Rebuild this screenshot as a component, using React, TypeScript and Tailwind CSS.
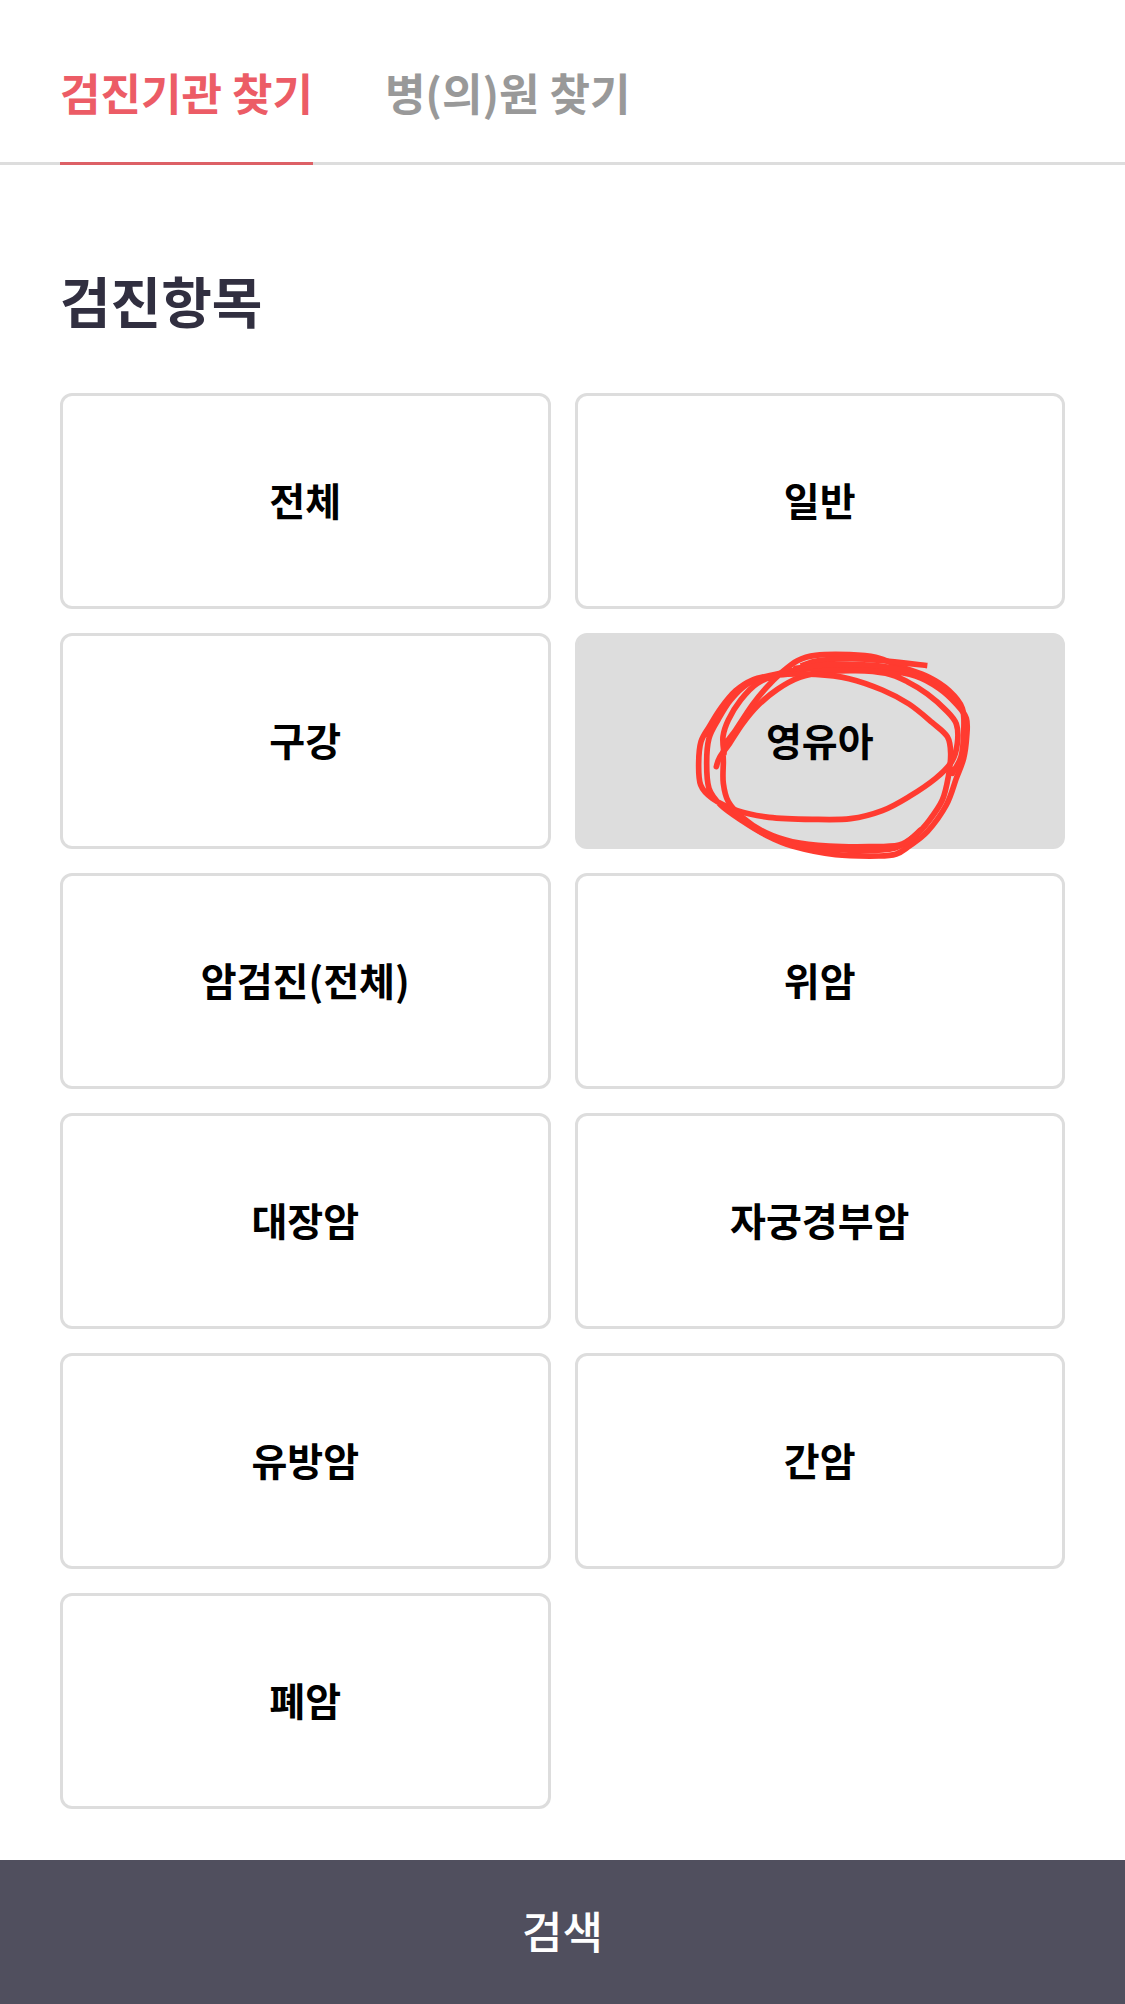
import { useState } from "react";

const items = [
  "전체",
  "일반",
  "구강",
  "영유아",
  "암검진(전체)",
  "위암",
  "대장암",
  "자궁경부암",
  "유방암",
  "간암",
  "폐암",
];

const tabs = ["검진기관 찾기", "병(의)원 찾기"];

type Point = [number, number];

// Pen strokes of the marker loop, as sampled points.
const strokes: Point[][] = [
  [
    [142, 440], [152, 412], [182, 370], [220, 312], [265, 258], [325, 208], [392, 172],
    [470, 156], [560, 152], [650, 160], [715, 185], [775, 222], [830, 270], [862, 312],
    [865, 370], [848, 425], [800, 475], [720, 530], [640, 572], [545, 596], [430, 598],
    [300, 592], [205, 572], [130, 535], [95, 495], [89, 430], [96, 365], [122, 318],
    [155, 265], [200, 212], [250, 180], [310, 165], [400, 148], [520, 143], [640, 150],
    [740, 168], [810, 205], [862, 252], [892, 295], [893, 350], [884, 415], [862, 475],
    [832, 555], [775, 635], [718, 680], [682, 702], [630, 708], [500, 704], [370, 678],
    [290, 645], [220, 603], [155, 555], [120, 505], [113, 430], [120, 355], [148, 298],
    [185, 240], [235, 192], [300, 168],
  ],
  [
    [165, 400], [162, 350], [178, 300], [215, 240], [265, 190], [330, 165], [440, 163],
    [540, 176], [640, 210], [720, 252], [790, 308], [835, 350], [845, 400], [838, 470],
    [820, 540], [780, 602], [740, 645], [690, 675], [600, 680], [480, 678], [370, 665],
    [290, 638], [220, 592], [178, 545], [163, 490], [163, 430], [166, 380], [200, 330],
    [250, 255], [290, 205], [335, 160], [385, 122], [440, 106], [540, 104], [620, 112],
    [700, 142], [780, 172], [840, 212], [880, 265], [884, 340], [876, 410], [850, 460],
  ],
  [
    [395, 138], [450, 122], [550, 116], [660, 124], [775, 137],
  ],
  [
    [380, 145], [480, 134], [600, 135], [700, 150], [780, 182],
  ],
  [
    [200, 575], [270, 632], [370, 672], [500, 688], [640, 690], [705, 672], [755, 630],
  ],
];

function smooth(points: Point[]) {
  let d = `M${points[0][0]} ${points[0][1]}`;
  for (let i = 0; i < points.length - 1; i++) {
    const p0 = points[Math.max(i - 1, 0)];
    const p1 = points[i];
    const p2 = points[i + 1];
    const p3 = points[Math.min(i + 2, points.length - 1)];
    d += `C${p1[0] + (p2[0] - p0[0]) / 6} ${p1[1] + (p2[1] - p0[1]) / 6} ${
      p2[0] - (p3[0] - p1[0]) / 6
    } ${p2[1] - (p3[1] - p1[1]) / 6} ${p2[0]} ${p2[1]}`;
  }
  return d;
}

function HandDrawnCircle() {
  return (
    <svg
      className="pointer-events-none absolute -top-4 left-1/2 -ml-[151px] h-[250px] w-[320px] overflow-visible"
      viewBox="0 0 960 750"
      fill="none"
      stroke="#ff3b30"
      strokeWidth="17"
      strokeLinejoin="round"
      aria-hidden="true"
    >
      {strokes.map((points, i) => (
        <path key={i} d={smooth(points)} strokeLinecap={i === 2 ? "butt" : "round"} />
      ))}
    </svg>
  );
}

export default function App() {
  const [tab, setTab] = useState(0);
  const [selected, setSelected] = useState("영유아");

  return (
    <div className="flex min-h-screen flex-col bg-white font-['Noto_Sans_CJK_KR',sans-serif]">
      <nav className="flex gap-[72px] border-b-3 border-[#dddddd] px-[60px]">
        {tabs.map((label, i) => (
          <button
            key={label}
            type="button"
            onClick={() => setTab(i)}
            className={
              i === tab
                ? "-mb-[3px] border-b-3 border-[#dd6066] pt-[62px] pb-10 text-[44px] leading-[60px] font-bold text-[#ec5c66]"
                : "-mb-[3px] border-b-3 border-transparent pt-[62px] pb-10 text-[44px] leading-[60px] font-bold text-[#999999]"
            }
          >
            {label}
          </button>
        ))}
      </nav>

      <main className="flex-1 px-[60px] pt-[94px] pb-[51px]">
        <h1 className="mb-[54px] text-[55px] leading-[80px] font-bold text-[#312f40]">
          검진항목
        </h1>
        <div className="grid grid-cols-2 gap-6">
          {items.map((item) => (
            <button
              key={item}
              type="button"
              aria-pressed={item === selected}
              onClick={() => setSelected(item)}
              className={
                item === selected
                  ? "relative h-54 rounded-xl border-3 border-[#dddddd] bg-[#dddddd] pb-1 text-[39px] leading-[60px] font-bold text-black"
                  : "relative h-54 rounded-xl border-3 border-[#dddddd] bg-white pb-1 text-[39px] leading-[60px] font-bold text-black"
              }
            >
              {item}
              {item === "영유아" && <HandDrawnCircle />}
            </button>
          ))}
        </div>
      </main>

      <button
        type="submit"
        className="h-36 w-full bg-[#504f5e] pb-1 text-[44px] leading-[60px] font-medium text-white"
      >
        검색
      </button>
    </div>
  );
}
